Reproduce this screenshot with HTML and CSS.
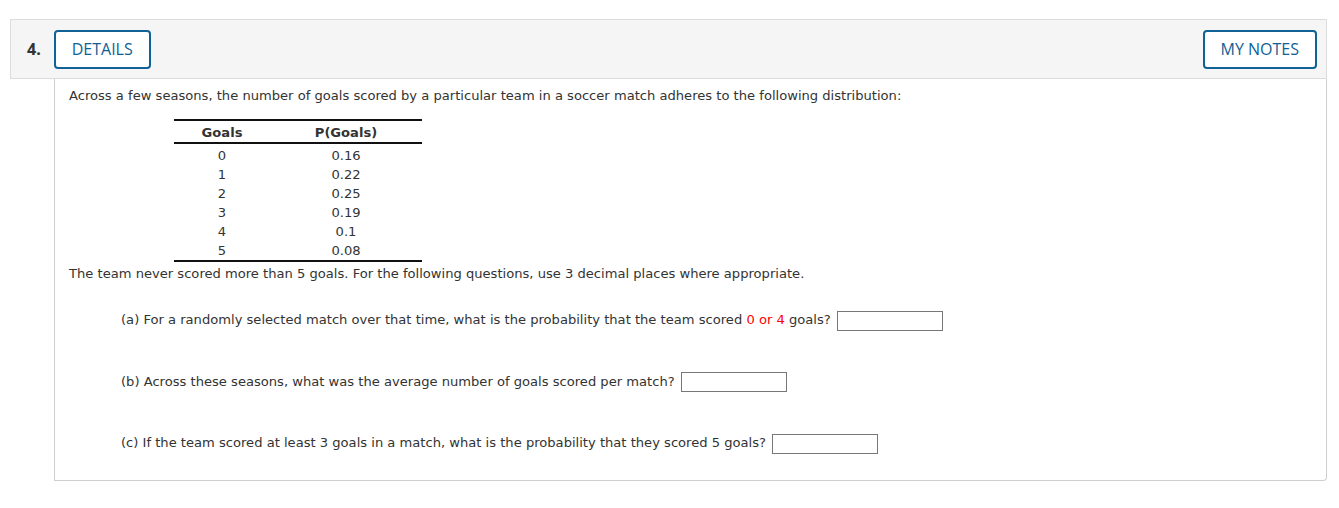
FILE: index.html
```html
<!DOCTYPE html>
<html>
<head>
<meta charset="utf-8">
<link rel="stylesheet" href="styles.css">
</head>
<body>
<div class="question">
  <div class="q-header">
    <div class="q-left">
      <span class="q-num">4.</span>
      <button class="q-btn">DETAILS</button>
    </div>
    <button class="q-btn">MY NOTES</button>
  </div>
  <div class="q-body">
    <p class="intro">Across a few seasons, the number of goals scored by a particular team in a soccer match adheres to the following distribution:</p>
    <table class="dist">
      <thead>
        <tr><th class="c1">Goals</th><th class="c2">P(Goals)</th></tr>
      </thead>
      <tbody>
        <tr><td>0</td><td>0.16</td></tr>
        <tr><td>1</td><td>0.22</td></tr>
        <tr><td>2</td><td>0.25</td></tr>
        <tr><td>3</td><td>0.19</td></tr>
        <tr><td>4</td><td>0.1</td></tr>
        <tr><td>5</td><td>0.08</td></tr>
      </tbody>
    </table>
    <p class="note">The team never scored more than 5 goals. For the following questions, use 3 decimal places where appropriate.</p>
    <div class="parts">
      <div class="part">(a) For a randomly selected match over that time, what is the probability that the team scored <span class="red">0 or 4</span> goals? <input class="ans" type="text"></div>
      <div class="part">(b) Across these seasons, what was the average number of goals scored per match? <input class="ans" type="text"></div>
      <div class="part">(c) If the team scored at least 3 goals in a match, what is the probability that they scored 5 goals? <input class="ans" type="text"></div>
    </div>
  </div>
</div>
</body>
</html>
```
FILE: styles.css
```css
html, body {
  margin: 0;
  padding: 0;
  background: #fff;
}
body {
  font-family: "DejaVu Sans", Verdana, sans-serif;
  font-size: 13.1px;
  color: #333;
}
.question {
  margin: 19px 0 0 10px;
  width: 1317px;
}
.q-header {
  box-sizing: border-box;
  height: 60px;
  background: #f5f5f5;
  border: 1px solid #dcdcdc;
  display: flex;
  align-items: center;
  justify-content: space-between;
  padding: 0 9px 0 16px;
}
.q-left {
  display: flex;
  align-items: center;
  gap: 13px;
}
.q-num {
  font-family: "Open Sans", sans-serif;
  font-weight: bold;
  font-size: 16px;
  color: #333;
}
.q-btn {
  box-sizing: border-box;
  height: 39px;
  padding: 0 16px;
  background: #fff;
  border: 2px solid #0f6196;
  border-radius: 4px;
  color: #0f6196;
  font-family: "Open Sans", sans-serif;
  font-size: 16px;
  line-height: 1;
}
.q-body {
  box-sizing: border-box;
  margin-left: 44px;
  border: 1px solid #cfcfcf;
  border-top: none;
  border-bottom-right-radius: 4px;
  height: 402px;
  padding: 8px 14px 0 14px;
}
.intro, .note {
  margin: 0;
  line-height: 18px;
}
.note {
  margin-top: 3px;
}
.dist {
  border-collapse: collapse;
  margin: 14px 0 0 105px;
  width: 248px;
}
.dist thead tr {
  border-top: 2px solid #111;
  border-bottom: 2px solid #111;
}
.dist tbody tr:last-child {
  border-bottom: 2px solid #111;
}
.dist th {
  font-weight: bold;
  line-height: 17px;
  padding: 3px 0 1px 0;
  text-align: center;
}
.dist th.c1 { width: 96px; }
.dist td {
  line-height: 19px;
  padding: 0;
  text-align: center;
}
.dist tbody tr:first-child td { padding-top: 2px; }
.parts {
  padding-left: 52px;
  padding-top: 26px;
  display: flex;
  flex-direction: column;
  gap: 40px;
}
.part {
  line-height: 21px;
}
.red { color: #f00; }
.ans {
  box-sizing: border-box;
  width: 106px;
  height: 20px;
  border: 1px solid #777;
  border-radius: 0;
  vertical-align: middle;
  margin: 0 0 0 2px;
  padding: 0;
}
```
